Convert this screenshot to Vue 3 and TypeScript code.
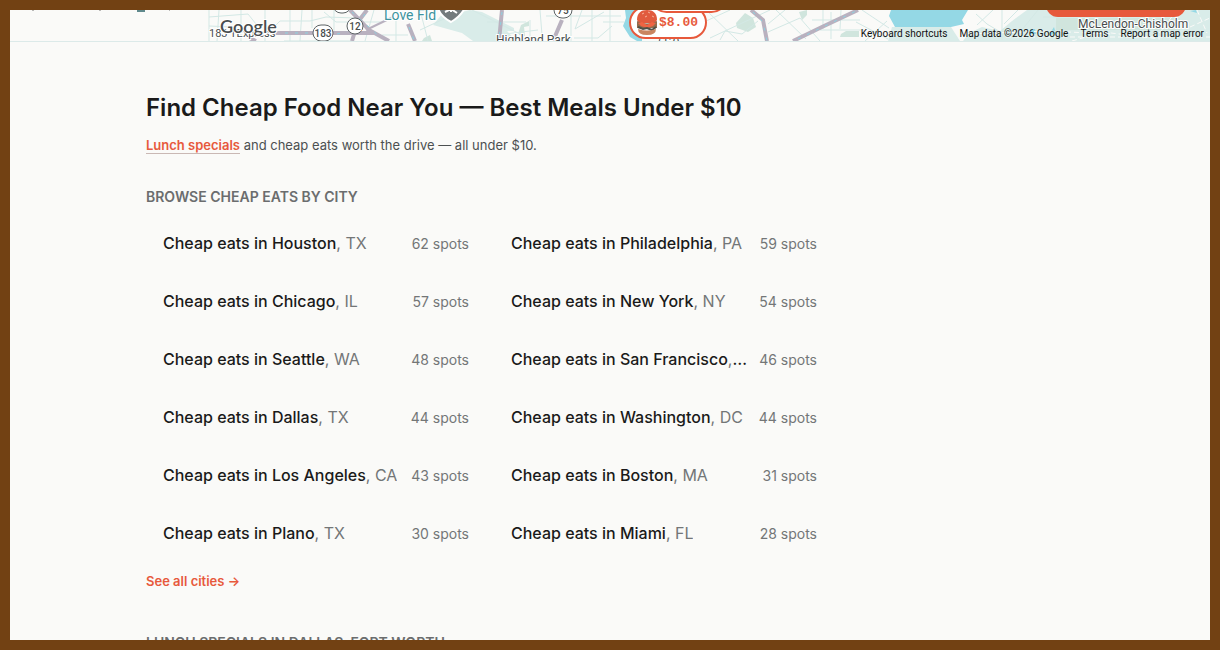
<script setup lang="ts">
interface City {
  name: string
  state: string
  spots: number
}

const cities: City[] = [
  { name: 'Houston', state: 'TX', spots: 62 },
  { name: 'Philadelphia', state: 'PA', spots: 59 },
  { name: 'Chicago', state: 'IL', spots: 57 },
  { name: 'New York', state: 'NY', spots: 54 },
  { name: 'Seattle', state: 'WA', spots: 48 },
  { name: 'San Francisco', state: 'CA', spots: 46 },
  { name: 'Dallas', state: 'TX', spots: 44 },
  { name: 'Washington', state: 'DC', spots: 44 },
  { name: 'Los Angeles', state: 'CA', spots: 43 },
  { name: 'Boston', state: 'MA', spots: 31 },
  { name: 'Plano', state: 'TX', spots: 30 },
  { name: 'Miami', state: 'FL', spots: 28 },
]
</script>

<template>
  <div class="frame">
    <section class="map" aria-label="Map">
      <svg class="tiles" viewBox="10 10 1200 31" preserveAspectRatio="xMidYMax slice" aria-hidden="true">
        <rect x="10" y="10" width="1200" height="31" fill="#fafaf8" />
        <!-- parks and pale ground -->
        <g fill="#d9ece9">
          <path d="M433 25 L443 13 L462 12 L470 10 L482 12 L514 28 V31 H507 L516 41 H473 L462 33 Z" />
          <path d="M892 27 H951 L960 41 H888 Z" />
          <path d="M963 41 L969 33 L982 27 L1000 31 L1012 21 L1027 10 H1210 V41 Z" />
        </g>
        <g fill="#d0e5dd">
          <path d="M736 23 L745 13 L753 18 L756 27 L748 32 L737 28 Z" />
          <path d="M799 12 L807 10 L807 15 L802 20 Z M841 34 L846 31 H859 V37 H840 Z" />
          <path d="M519 31 L521 25 L529 21 V26 L524 27 L525 36 L519 35 Z M424 38 L430 35 L432 41 H422 Z" />
          <path d="M1056 27 V18 H1180 V30 H1056 Z M650 11 L656 10 L654 14 Z" />
        </g>
        <!-- water -->
        <g fill="#94d8e5">
          <path d="M625 10 H642 V41 H637 L630 37 L623 26 L626 18 Z" />
          <path d="M891 10 H968 L962 20 L964 24 L951 27 H895 L889 16 Z" />
          <path d="M1030 29 L1035 29 L1036 34 L1031 34 Z M1049 35 L1054 27 L1056 34 Z M1190 11 L1196 10 L1197 13 Z M1160 20 L1166 20 L1169 24 L1163 23 Z" />
        </g>
        <!-- local streets -->
        <g fill="none" stroke="#d3e8e5" stroke-width="1">
          <path d="M209 10 V41 M219 10 L217 41 M241 10 V41 M265 10 V41 M290 10 V41 M302 10 L300 41 M209 17 L248 14 L256 24 L274 27 L280 21 H310 L326 17 L356 18 M209 26 L232 27 M284 41 H352" />
          <path d="M312 10 V28 M324 12 L336 22 H382 M334 10 V32 M365 41 L374 10 M382 35 H408 M396 20 V41 M420 10 L428 41 M420 30 L448 17 M472 10 L522 35 M530 20 V41 M540 10 L542 35 M505 34 L538 30 M487 22 H526 M571 10 V41 M582 10 L575 29 L604 12 M592 10 V41 M603 22 H624 M610 10 V41 M546 16 H621 M574 38 H598 L612 26" />
          <path d="M706 10 L738 41 M710 38 L770 10 M704 22 L730 10 M720 40 L725 31 L742 34 L758 21 M768 24 L785 10 M768 32 L800 18 L820 41 M776 10 L806 39 M823 10 V29 M831 12 V39 M841 10 L840 29 M812 20 H860 M820 30 H864 M856 22 L888 39 M862 10 L889 28 M865 41 L887 21" />
          <path d="M976 14 L987 24 L1002 33 M977 25 L993 10 M1002 10 V40 M1018 10 L1004 24 M1038 10 L1021 31 M1043 17 H1060" />
        </g>
        <g fill="none" stroke="#fafaf8" stroke-width="1" stroke-dasharray="5 3">
          <path d="M970 34 L1048 31 L1110 34 M1072 41 L1103 32 L1160 39 M1177 10 L1158 35 M1190 27 L1210 18 M1197 10 L1207 33 M1006 37 H1210" />
        </g>
        <!-- freeways -->
        <g fill="none" stroke="#b9b1bf" stroke-width="4">
          <path d="M272 33 H374 M355 31 L352 41 M350 10 L369 30 L389 41 M367 10 L354 27 M408 24 L415 41 M502 10 L499 41 M562 20 L553 41 M249 38 L256 41" />
          <path d="M751 10 L763 20 L767 41 M793 41 L824 26 L858 10" />
        </g>
        <path d="M366 30 L393 17" fill="none" stroke="#b9b1bf" stroke-width="2" />
        <path d="M285 33 H310 M337 34 L347 32 M352 12 L380 37 M365 14 L360 21 M409 27 L414 40 M502 12 L499 38 M753 12 L763 22 L767 41 M798 39 L856 11" fill="none" stroke="#8bd2e2" stroke-width="1" stroke-dasharray="3 7" />
        <!-- route shields -->
        <g fill="#ffffff" stroke="#5c6264" stroke-width="1">
          <rect x="333" y="-3" width="18" height="16" rx="8" />
          <rect x="313" y="25" width="20" height="16" rx="8" />
          <circle cx="355" cy="26" r="8" />
          <rect x="554" y="2" width="18" height="16" rx="8" />
        </g>
        <path d="M438 8 Q440 16 451 22 Q460 17 465 8" fill="#747b7d" stroke="#ffffff" stroke-width="2" />
        <path d="M445 12 L451 9 L457 13 M451 5 V12" stroke="#ffffff" stroke-width="2" fill="none" />
        <path d="M33 10 V11 M99 10 H101 M169 10 H170" stroke="#777" stroke-width="1" />
        <path d="M137 11 H145" stroke="#5f898c" stroke-width="2" />
        <g class="labels">
          <text x="323" y="37" text-anchor="middle" class="route">183</text>
          <text x="355" y="30" text-anchor="middle" class="route">12</text>
          <text x="563" y="14" text-anchor="middle" class="route">75</text>
          <text x="384" y="20" class="airport">Love Fld</text>
          <text x="209" y="37" class="express">183 TExpress</text>
          <text x="496" y="44" class="place">Highland Park</text>
          <text x="658" y="46" class="place">(12)</text>
          <text x="1078" y="28" class="place">McLendon-Chisholm</text>
          <text x="220" y="33" class="google">Google</text>
        </g>
      </svg>
      <button class="pin" type="button">
        <svg viewBox="0 0 22 25" width="22" height="25" aria-hidden="true">
          <path d="M1 10 C1 3 5 0 11 0 S21 3 21 10 L19 13 H3 Z" fill="#e15b3e" />
          <path d="M6 4 L8 3 M12 2 L14 3 M16 6 L18 7 M9 7 L11 6" stroke="#f6b39a" stroke-width="1" />
          <path d="M1 11 Q11 16 21 11 V18 H1 Z" fill="#936b4c" />
          <path d="M2 13 L6 12 L11 15 L16 12 L20 13 L17 16 L11 18 L5 16 Z" fill="#f06443" />
          <path d="M2 17 L7 19 L11 18 L16 20 L20 17" stroke="#4f5047" stroke-width="2" fill="none" />
          <path d="M2 19 Q11 22 20 19 Q20 25 11 25 Q2 25 2 19" fill="#c98560" />
        </svg>
        <span>$8.00</span>
      </button>
      <span class="pin pin-above"></span>
      <button class="search" type="button" aria-label="Search this area"></button>
      <div class="credits">
        <button type="button">Keyboard shortcuts</button>
        <span>Map data ©2026 Google</span>
        <a href="#terms">Terms</a>
        <a href="#report">Report a map error</a>
      </div>
    </section>

    <main class="content">
      <h1>Find Cheap Food Near You — Best Meals Under $10</h1>
      <p class="intro"><a href="#lunch">Lunch specials</a> and cheap eats worth the drive — all under $10.</p>

      <h2>BROWSE CHEAP EATS BY CITY</h2>
      <ul class="cities">
        <li v-for="city in cities" :key="city.name">
          <a class="city" href="#cities">
            <span class="name">Cheap eats in {{ city.name }}<span class="state">, {{ city.state }}</span></span>
            <span class="spots">{{ city.spots }} spots</span>
          </a>
        </li>
      </ul>
      <a class="all" href="#cities">See all cities →</a>

      <h2 id="lunch">LUNCH SPECIALS IN DALLAS–FORT WORTH</h2>
    </main>
  </div>
</template>

<style>
body {
  margin: 0;
}
</style>

<style scoped>
.frame {
  box-sizing: border-box;
  height: 100vh;
  overflow: hidden;
  border: 10px solid #724113;
  background: #fafaf8;
  color: #1a1a1a;
  font-family: Inter, "Liberation Sans", sans-serif;
}

button {
  margin: 0;
  padding: 0;
  border: 0;
  background: none;
  color: inherit;
  font: inherit;
  cursor: pointer;
}

a {
  color: inherit;
  text-decoration: none;
}

.map {
  position: relative;
  height: 31px;
  overflow: hidden;
  border-bottom: 1px solid #dceae9;
}

.tiles {
  display: block;
  width: 100%;
  height: 100%;
}

.labels {
  font-family: Roboto, "Liberation Sans", sans-serif;
  fill: #494d4e;
  stroke: #ffffff;
  stroke-width: 2px;
  paint-order: stroke;
}

.route {
  font-size: 10px;
  font-weight: 500;
}

.airport {
  font-size: 14px;
  fill: #3d939d;
}

.express {
  font-size: 11px;
}

.place {
  font-size: 12px;
}

.google {
  font-family: Lato, sans-serif;
  font-size: 18px;
  font-weight: 600;
}

.pin {
  position: absolute;
  left: 619px;
  top: -4px;
  display: flex;
  align-items: center;
  gap: 1px;
  box-sizing: border-box;
  width: 78px;
  height: 33px;
  padding-left: 5px;
  border: 2px solid #e7593c;
  border-radius: 17px;
  background: #ffffff;
  color: #e7593c;
  font-family: "Liberation Mono", monospace;
  font-size: 13px;
  font-weight: 700;
}

.pin-above {
  left: 640px;
  top: -30px;
}

.search {
  position: absolute;
  right: 24px;
  top: -30px;
  width: 140px;
  height: 37px;
  border-radius: 12px;
  background: #e7593c;
}

.credits {
  position: absolute;
  right: 0;
  bottom: 0;
  display: flex;
  gap: 12px;
  padding: 0 6px;
  color: #111111;
  font-family: Roboto, "Liberation Sans", sans-serif;
  font-size: 10px;
  line-height: 14px;
  white-space: nowrap;
}

.content {
  max-width: 928px;
  margin: 0 auto;
  padding-top: 49px;
}

h1 {
  margin: 0;
  font-size: 24px;
  font-weight: 600;
  line-height: 34px;
}

.intro {
  margin: 9px 0 31px;
  color: #4c5051;
  font-size: 13px;
  line-height: 22px;
}

.intro a {
  border-bottom: 1px solid #c9b8b4;
  color: #e7593c;
  font-weight: 600;
}

h2 {
  margin: 0;
  color: #6b6d6e;
  font-size: 14px;
  font-weight: 600;
  line-height: 20px;
}

.cities {
  display: grid;
  grid-template-columns: repeat(2, minmax(0, 1fr));
  gap: 8px;
  max-width: 688px;
  margin: 11px 0 13px;
  padding: 0;
  list-style: none;
}

.city {
  display: flex;
  align-items: center;
  justify-content: space-between;
  gap: 12px;
  height: 50px;
  padding: 0 17px;
  font-size: 16px;
  font-weight: 500;
}

.name {
  overflow: hidden;
  text-overflow: ellipsis;
  white-space: nowrap;
}

.state {
  color: #737677;
  font-weight: 400;
}

.spots {
  flex: none;
  color: #737677;
  font-size: 14px;
  font-weight: 400;
}

.all {
  display: block;
  width: fit-content;
  margin-bottom: 42px;
  color: #e7593c;
  font-size: 13px;
  font-weight: 600;
  line-height: 20px;
}
</style>
